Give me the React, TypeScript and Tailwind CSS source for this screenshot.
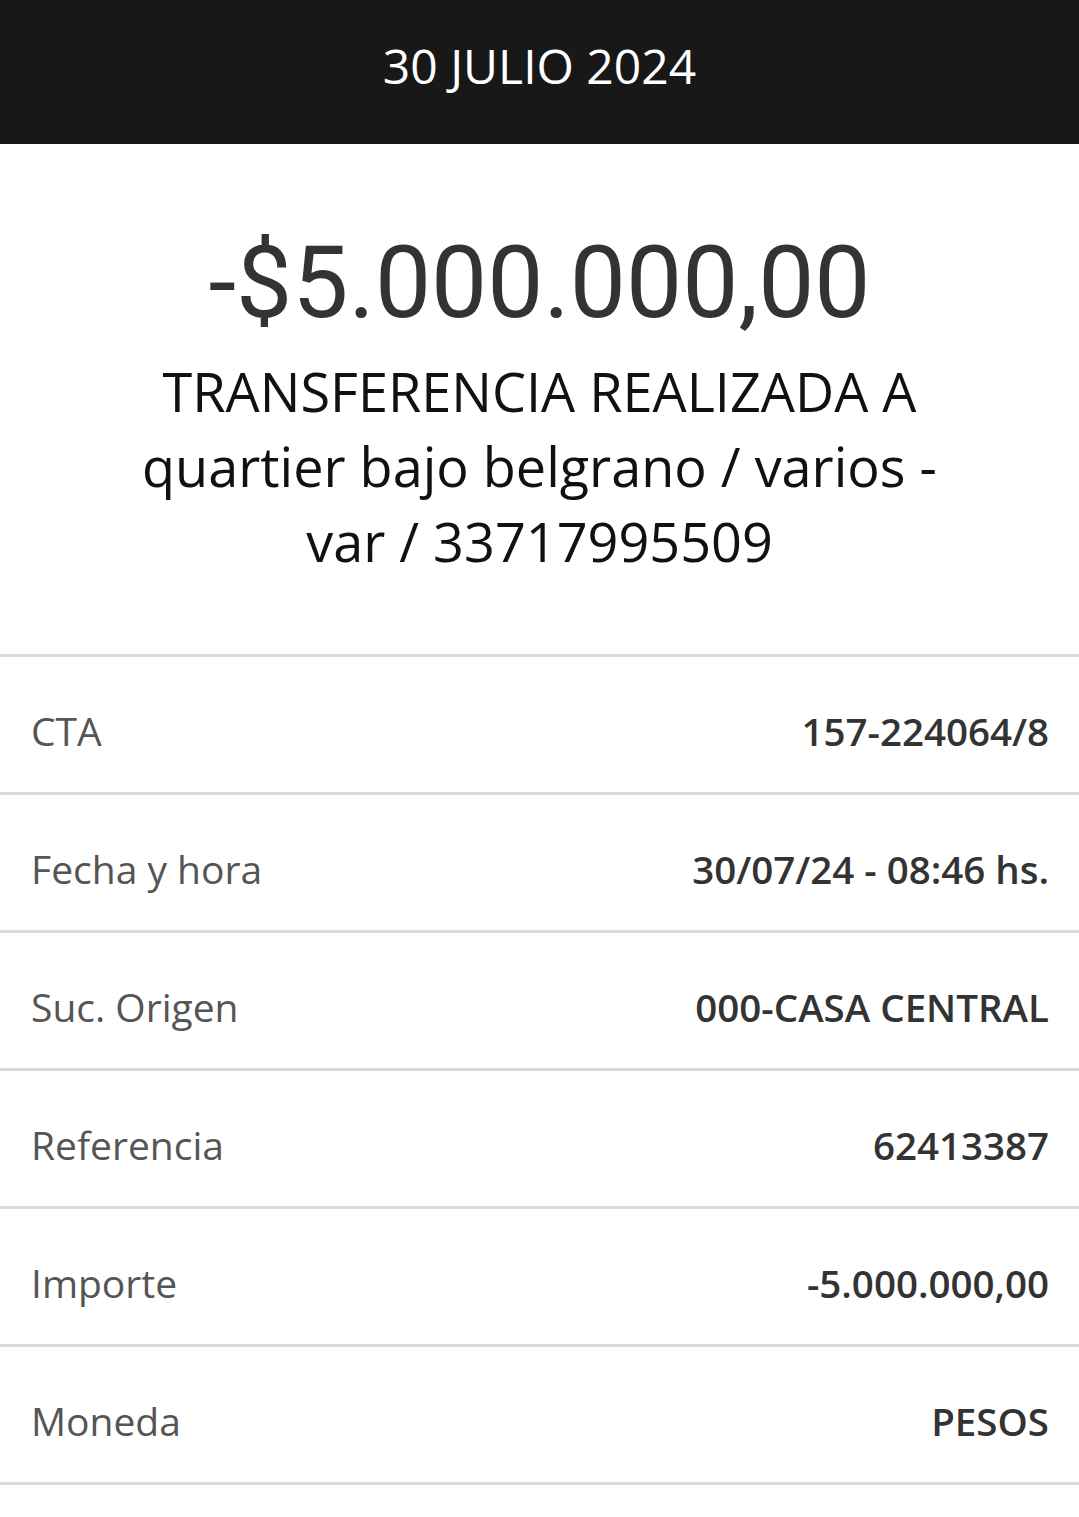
const rows: { label: string; value: string }[] = [
  { label: "CTA", value: "157-224064/8" },
  { label: "Fecha y hora", value: "30/07/24 - 08:46 hs." },
  { label: "Suc. Origen", value: "000-CASA CENTRAL" },
  { label: "Referencia", value: "62413387" },
  { label: "Importe", value: "-5.000.000,00" },
  { label: "Moneda", value: "PESOS" },
];

export default function App() {
  return (
    <div className="min-h-[1517px] bg-white font-['Open_Sans',sans-serif]">
      <header className="flex h-[144px] items-center justify-center bg-[#181818] pb-[12px]">
        <h1 className="text-[48px] leading-none text-white [font-stretch:90%]">30 JULIO 2024</h1>
      </header>

      <section className="flex flex-col items-center px-[60px] pb-[75px] pt-[84px] text-center">
        <div className="font-['Roboto',sans-serif] text-[100px] leading-[110px] text-[#333333]">
          -$5.000.000,00
        </div>
        <p className="mt-[16px] max-w-[820px] text-[54px] leading-[75px] text-[#111111]">
          TRANSFERENCIA REALIZADA A quartier bajo belgrano / varios - var / 33717995509
        </p>
      </section>

      <ul className="border-t-[3px] border-[#dadada]">
        {rows.map((r) => (
          <li
            key={r.label}
            className="flex h-[138px] items-center justify-between border-b-[3px] border-[#dadada] pl-[31px] pr-[30px] pt-[14px]"
          >
            <span className="text-[39px] text-[#555555]">{r.label}</span>
            <span className="text-[38.5px] font-semibold text-[#333333]">{r.value}</span>
          </li>
        ))}
      </ul>
    </div>
  );
}
